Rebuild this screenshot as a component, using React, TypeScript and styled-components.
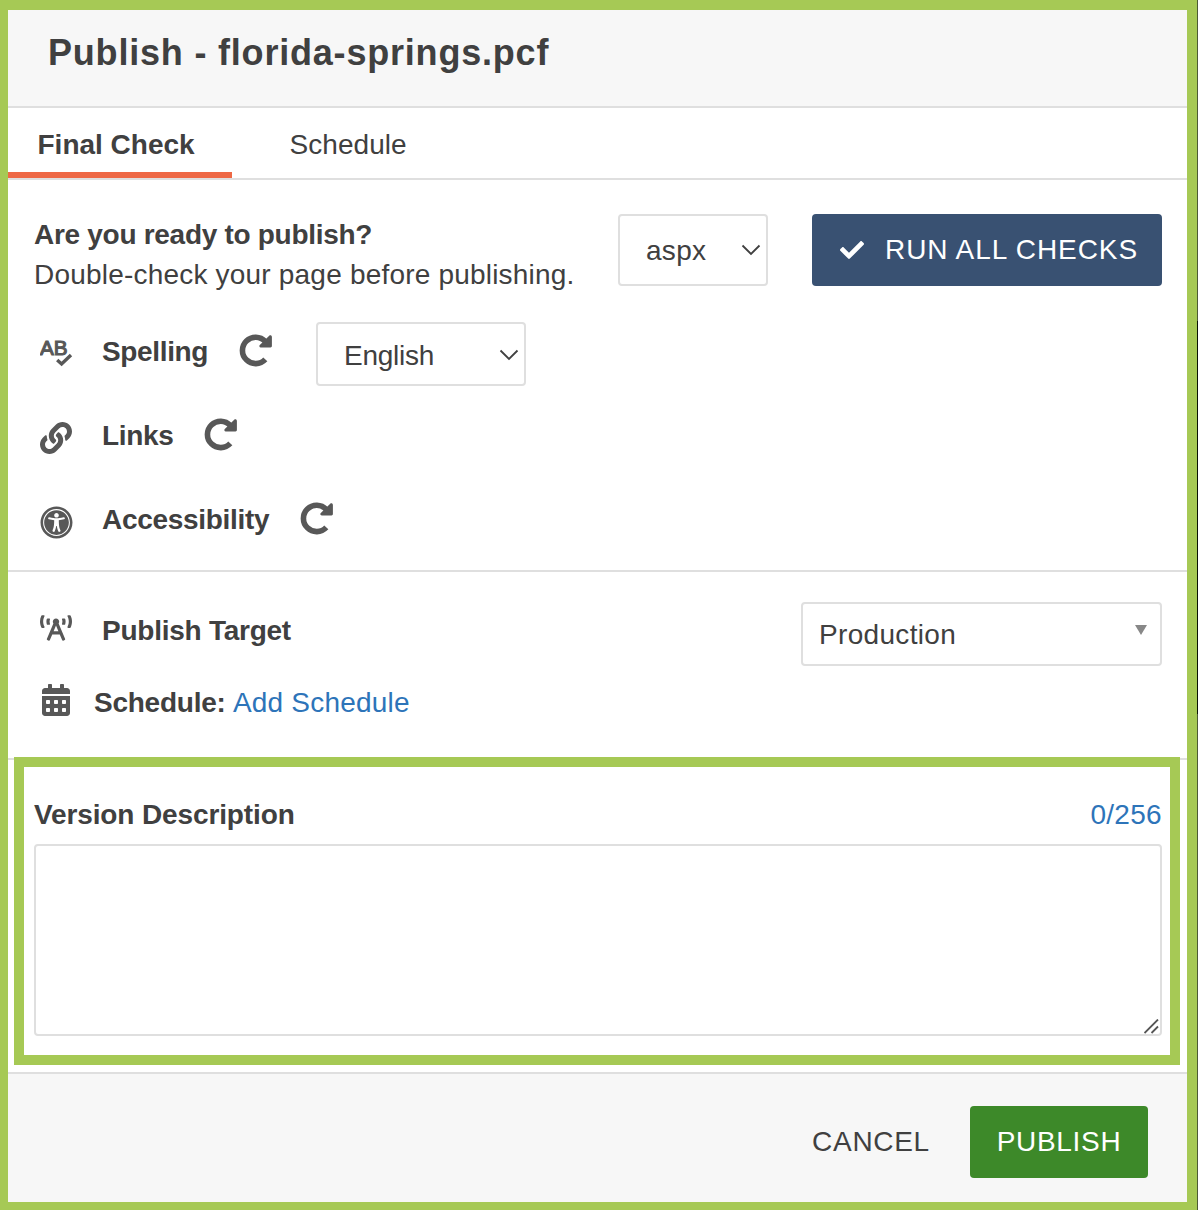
import React from "react";
import styled, { createGlobalStyle } from "styled-components";
import { FaLink, FaUniversalAccess, FaBroadcastTower, FaCalendarAlt, FaCheck } from "react-icons/fa";

const Global = createGlobalStyle`
  * { box-sizing: border-box; }
  body { margin: 0; font-family: "Liberation Sans", Arial, Helvetica, sans-serif; font-size: 28px; color: #404040; }
`;

const Frame = styled.div`
  width: 1198px;
  height: 1210px;
  background:
    linear-gradient(#4b5a35 0 321px, #0a1206 321px 714px, #4b5a35 714px) right / 1px 100% no-repeat,
    #a6c955;
  padding: 10px 11px 8px 8px;
`;
const Dialog = styled.div`
  height: 100%;
  background: #fff;
  display: flex;
  flex-direction: column;
`;
const Header = styled.header`
  height: 98px;
  padding: 21px 40px 0;
  background: #f7f7f7;
  border-bottom: 2px solid #dfdfdf;
`;
const Title = styled.h1`
  margin: 0;
  font-size: 36px;
  line-height: 44px;
  font-weight: bold;
`;
const Tabs = styled.nav`
  display: flex;
  height: 72px;
  border-bottom: 2px solid #dfdfdf;
`;
const Tab = styled.div<{ $active?: boolean }>`
  width: ${(p) => (p.$active ? 224 : 200)}px;
  height: 70px;
  padding: 17px 0 0 ${(p) => (p.$active ? 29.5 : 57.5)}px;
  line-height: 40px;
  font-weight: ${(p) => (p.$active ? "bold" : "normal")};
  border-bottom: ${(p) => (p.$active ? "6px solid #ee6845" : "0")};
`;
const Txt = styled.span<{ $ls?: number; $bold?: boolean }>`
  letter-spacing: ${(p) => p.$ls ?? 0}px;
  font-weight: ${(p) => (p.$bold ? "bold" : "inherit")};
  white-space: nowrap;
`;
const Checks = styled.section`
  height: 392px;
  padding: 34px 25px 0 26px;
  border-bottom: 2px solid #dfdfdf;
`;
const Intro = styled.div`
  display: flex;
  height: 72px;
`;
const IntroText = styled.div`
  width: 584px;
  padding-top: 1px;
  line-height: 40px;
`;
const Line = styled.div``;
const Select = styled.div<{ $w: number; $h: number; $pl: number; $pt?: number }>`
  width: ${(p) => p.$w}px;
  height: ${(p) => p.$h}px;
  padding: ${(p) => p.$pt ?? 2}px 0 0 ${(p) => p.$pl}px;
  border: 2px solid #dfdfdf;
  border-radius: 4px;
  background: #fff;
  display: flex;
  align-items: center;
  justify-content: space-between;
`;
const Arrow = styled.svg<{ $mr: number; $mb: number }>`
  display: block;
  margin: 0 ${(p) => p.$mr}px ${(p) => p.$mb}px 0;
`;
const Button = styled.button<{ $bg: string; $w: number }>`
  width: ${(p) => p.$w}px;
  height: 72px;
  padding: 0;
  border: 0;
  border-radius: 4px;
  background: ${(p) => p.$bg};
  color: ${(p) => (p.$bg === "transparent" ? "#404040" : "#fff")};
  font: inherit;
  display: flex;
  align-items: center;
  justify-content: center;
`;
const RunButton = styled(Button)`
  margin-left: 44px;
  justify-content: flex-start;
  padding-left: 28px;
  gap: 21px;
`;
const Row = styled.div<{ $h: number }>`
  height: ${(p) => p.$h}px;
  padding-left: 6px;
  display: flex;
  align-items: flex-start;
`;
const IconBox = styled.span<{ $w: number; $top: number }>`
  width: ${(p) => p.$w}px;
  flex: none;
  padding-top: ${(p) => p.$top}px;
  color: #585858;
  svg { display: block; }
`;
const Label = styled.span<{ $w?: number; $top: number }>`
  width: ${(p) => (p.$w ? p.$w + "px" : "auto")};
  padding-top: ${(p) => p.$top}px;
  line-height: 40px;
  white-space: pre;
`;
const CheckRows = styled.div`
  padding-top: 36px;
`;
const Target = styled.section`
  height: 188px;
  padding: 30px 25px 0 26px;
  border-bottom: 2px solid #dfdfdf;
`;
const Push = styled.div`
  margin-left: auto;
`;
const Link = styled.a`
  color: #2d74b9;
`;
const Highlight = styled.section`
  position: relative;
  height: 308px;
  margin: -3px 7px 0 6px;
  padding: 28px 8px 0 10px;
  border: 10px solid #a6c955;
  background: #fff;
`;
const VersionHead = styled.div`
  display: flex;
  justify-content: space-between;
  height: 49px;
  line-height: 40px;
`;
const AreaWrap = styled.div`
  position: relative;
  height: 192px;
`;
const Area = styled.textarea`
  display: block;
  width: 100%;
  height: 192px;
  border: 2px solid #dfdfdf;
  border-radius: 4px;
  resize: none;
  font: inherit;
`;
const Grip = styled.svg`
  position: absolute;
  right: 3px;
  bottom: 2px;
`;
const Footer = styled.footer`
  height: 130px;
  margin-top: 7px;
  padding: 32px 39px 0 0;
  background: #f7f7f7;
  border-top: 2px solid #dfdfdf;
  display: flex;
  justify-content: flex-end;
`;

const Chevron = () => (
  <Arrow $mr={5} $mb={2} width="20" height="12" viewBox="0 0 20 12" fill="none" stroke="#404040" strokeWidth="1.8">
    <path d="M1.5 1.5 L10 10 L18.5 1.5" />
  </Arrow>
);

const SpellIcon = () => (
  <svg width="33" height="32" viewBox="0 0 33 32" fill="#585858">
    <text x="0" y="17.4" fontSize="20" stroke="#585858" strokeWidth="1.1" textLength="27.6" lengthAdjust="spacingAndGlyphs">AB</text>
    <path d="M17.6 22.6L21.6 26.2L31 17.4" fill="none" stroke="#fff" strokeWidth="5.4" />
    <path d="M17.2 22L21.6 26L31 17" fill="none" stroke="#585858" strokeWidth="3.4" />
  </svg>
);

const RedoIcon = () => (
  <svg width="33" height="33" viewBox="0 0 33 33" fill="#585858">
    <path d="M26.3 25.4A13.2 13.2 0 1 1 26.3 7.4" fill="none" stroke="#585858" strokeWidth="5.6" />
    <path d="M30.2 1.8c1-.9 2.7-.4 2.7 1.1V12.1c0 .8-.6 1.4-1.4 1.4H21.8c-1.4 0-2-1.6-1-2.5Z" />
  </svg>
);

const checks = [
  { name: "Spelling", icon: <SpellIcon />, top: 16, w: 137, ls: -0.35 },
  { name: "Links", icon: <FaLink size={32} />, top: 16, w: 102, ls: -0.35 },
  { name: "Accessibility", icon: <FaUniversalAccess size={33} />, top: 15.5, w: 198, ls: -0.3 },
];

export default function App() {
  return (
    <Frame>
      <Global />
      <Dialog>
        <Header>
          <Title><Txt $ls={0.8}>Publish - florida-springs.pcf</Txt></Title>
        </Header>
        <Tabs>
          <Tab $active><Txt>Final Check</Txt></Tab>
          <Tab><Txt $ls={0.05}>Schedule</Txt></Tab>
        </Tabs>
        <Checks>
          <Intro>
            <IntroText>
              <Line><Txt $bold $ls={-0.29}>Are you ready to publish?</Txt></Line>
              <Line><Txt $ls={0.2}>Double-check your page before publishing.</Txt></Line>
            </IntroText>
            <Select $w={150} $h={72} $pl={26}><Txt $ls={0.3}>aspx</Txt><Chevron /></Select>
            <RunButton $bg="#395172" $w={350}><FaCheck size={24} /><Txt $ls={0.92}>RUN ALL CHECKS</Txt></RunButton>
          </Intro>
          <CheckRows>
            {checks.map((c) => (
              <Row key={c.name} $h={84}>
                <IconBox $w={62} $top={c.top}>{c.icon}</IconBox>
                <Label $w={c.w} $top={10}><Txt $bold $ls={c.ls}>{c.name}</Txt></Label>
                <IconBox $w={77} $top={12}><RedoIcon /></IconBox>
                {c.name === "Spelling" && (
                  <Select $w={210} $h={64} $pl={26} $pt={3}><Txt $ls={-0.25}>English</Txt><Chevron /></Select>
                )}
              </Row>
            ))}
          </CheckRows>
        </Checks>
        <Target>
          <Row $h={80}>
            <IconBox $w={62} $top={10}><FaBroadcastTower size={32} /></IconBox>
            <Label $top={9}><Txt $bold $ls={-0.25}>Publish Target</Txt></Label>
            <Push>
              <Select $w={361} $h={64} $pl={16}>
                <Txt $ls={0.33}>Production</Txt>
                <Arrow $mr={13} $mb={10} width="12" height="10" viewBox="0 0 12 10" fill="#888"><path d="M0 0H12L6 10Z" /></Arrow>
              </Select>
            </Push>
          </Row>
          <Row $h={60}>
            <IconBox $w={54} $top={2}><FaCalendarAlt size={32} /></IconBox>
            <Label $top={1}><Txt $bold $ls={-0.25}>Schedule:</Txt><Txt $ls={-0.4}> </Txt><Link><Txt $ls={0.2}>Add Schedule</Txt></Link></Label>
          </Row>
        </Target>
        <Highlight>
          <VersionHead>
            <Txt $bold $ls={-0.12}>Version Description</Txt>
            <Link><Txt $ls={0.3}>0/256</Txt></Link>
          </VersionHead>
          <AreaWrap>
            <Area />
            <Grip width="15" height="15" viewBox="0 0 15 15" stroke="#555" strokeWidth="1.8"><path d="M.5 14L14 .5M7.5 14L14 7.5" /></Grip>
          </AreaWrap>
        </Highlight>
        <Footer>
          <Button $bg="transparent" $w={198}><Txt $ls={0.7}>CANCEL</Txt></Button>
          <Button $bg="#3d8929" $w={178}><Txt $ls={0.7}>PUBLISH</Txt></Button>
        </Footer>
      </Dialog>
    </Frame>
  );
}
